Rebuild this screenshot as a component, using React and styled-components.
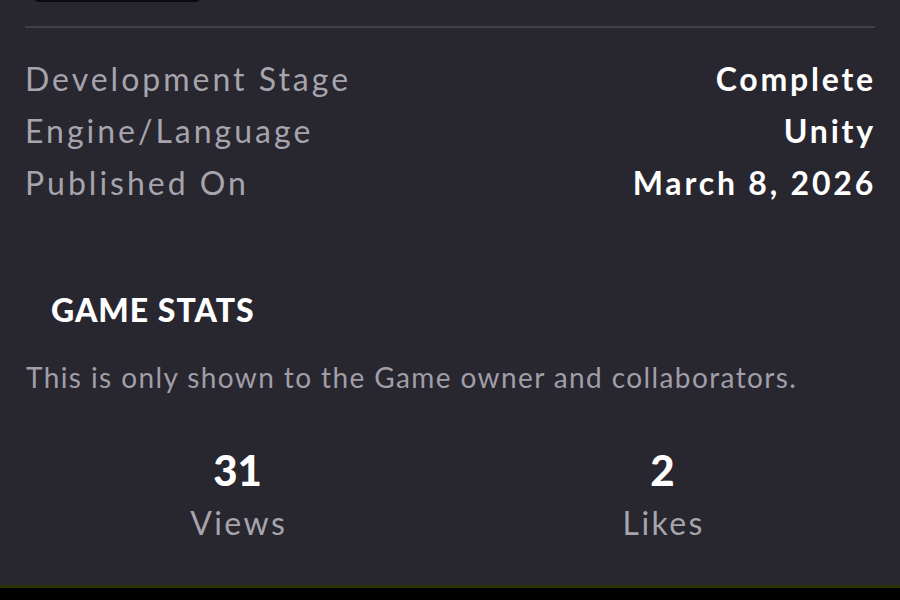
import styled, { createGlobalStyle } from 'styled-components';

const Global = createGlobalStyle`
  html, body {
    margin: 0;
    padding: 0;
    background: #000;
  }
  body {
    font-family: Lato, "Noto Sans", sans-serif;
  }
`;

const Page = styled.div`
  width: 900px;
  height: 588px;
  background: #28262f;
  border-bottom: 3px solid #2b3504;
  overflow: hidden;
  display: flex;
  flex-direction: column;
  padding: 0 25px;
  box-sizing: border-box;
`;

const TopButton = styled.div`
  width: 168px;
  height: 12px;
  margin: -10px 0 0 8px;
  background: #0b0a0e;
  border-radius: 6px;
  flex-shrink: 0;
`;

const Divider = styled.hr`
  border: none;
  border-top: 2px solid #403e48;
  margin: 24px 0 0;
  width: 100%;
`;

const Details = styled.div`
  display: flex;
  flex-direction: column;
  margin-top: 25px;
`;

const Row = styled.div`
  display: flex;
  justify-content: space-between;
  align-items: baseline;
  height: 52px;
  line-height: 52px;
  font-size: 32px;
  letter-spacing: 3px;
`;

const Label = styled.span`
  color: #a6a4ad;
`;

const Value = styled.span`
  color: #fff;
  font-weight: 700;
  letter-spacing: 2.8px;
  margin-right: -1px;
`;

const Heading = styled.h2`
  margin: 81px 0 0 26px;
  font-size: 32px;
  line-height: 40px;
  font-weight: 900;
  color: #fff;
  letter-spacing: 1px;
`;

const Note = styled.p`
  margin: 30px 0 0 1px;
  font-size: 28px;
  line-height: 34px;
  color: #a09ea8;
  letter-spacing: 1.4px;
`;

const Stats = styled.div`
  display: grid;
  grid-template-columns: 1fr 1fr;
  margin-top: 55px;
`;

const Stat = styled.div`
  display: flex;
  flex-direction: column;
  align-items: center;
`;

const Number = styled.div`
  color: #fff;
  font-size: 42px;
  font-weight: 900;
  line-height: 42px;
`;

const StatLabel = styled.div`
  color: #a6a4ad;
  font-size: 32px;
  line-height: 40px;
  margin-top: 12px;
  letter-spacing: 2.4px;
  margin-right: -2.4px;
`;

const details = [
  ['Development Stage', 'Complete'],
  ['Engine/Language', 'Unity'],
  ['Published On', 'March 8, 2026'],
];

const stats = [
  ['31', 'Views'],
  ['2', 'Likes'],
];

export default function App() {
  return (
    <>
      <Global />
      <Page>
        <TopButton />
        <Divider />
        <Details>
          {details.map(([label, value]) => (
            <Row key={label}>
              <Label>{label}</Label>
              <Value>{value}</Value>
            </Row>
          ))}
        </Details>
        <Heading>GAME STATS</Heading>
        <Note>This is only shown to the Game owner and collaborators.</Note>
        <Stats>
          {stats.map(([num, label]) => (
            <Stat key={label}>
              <Number>{num}</Number>
              <StatLabel>{label}</StatLabel>
            </Stat>
          ))}
        </Stats>
      </Page>
    </>
  );
}
